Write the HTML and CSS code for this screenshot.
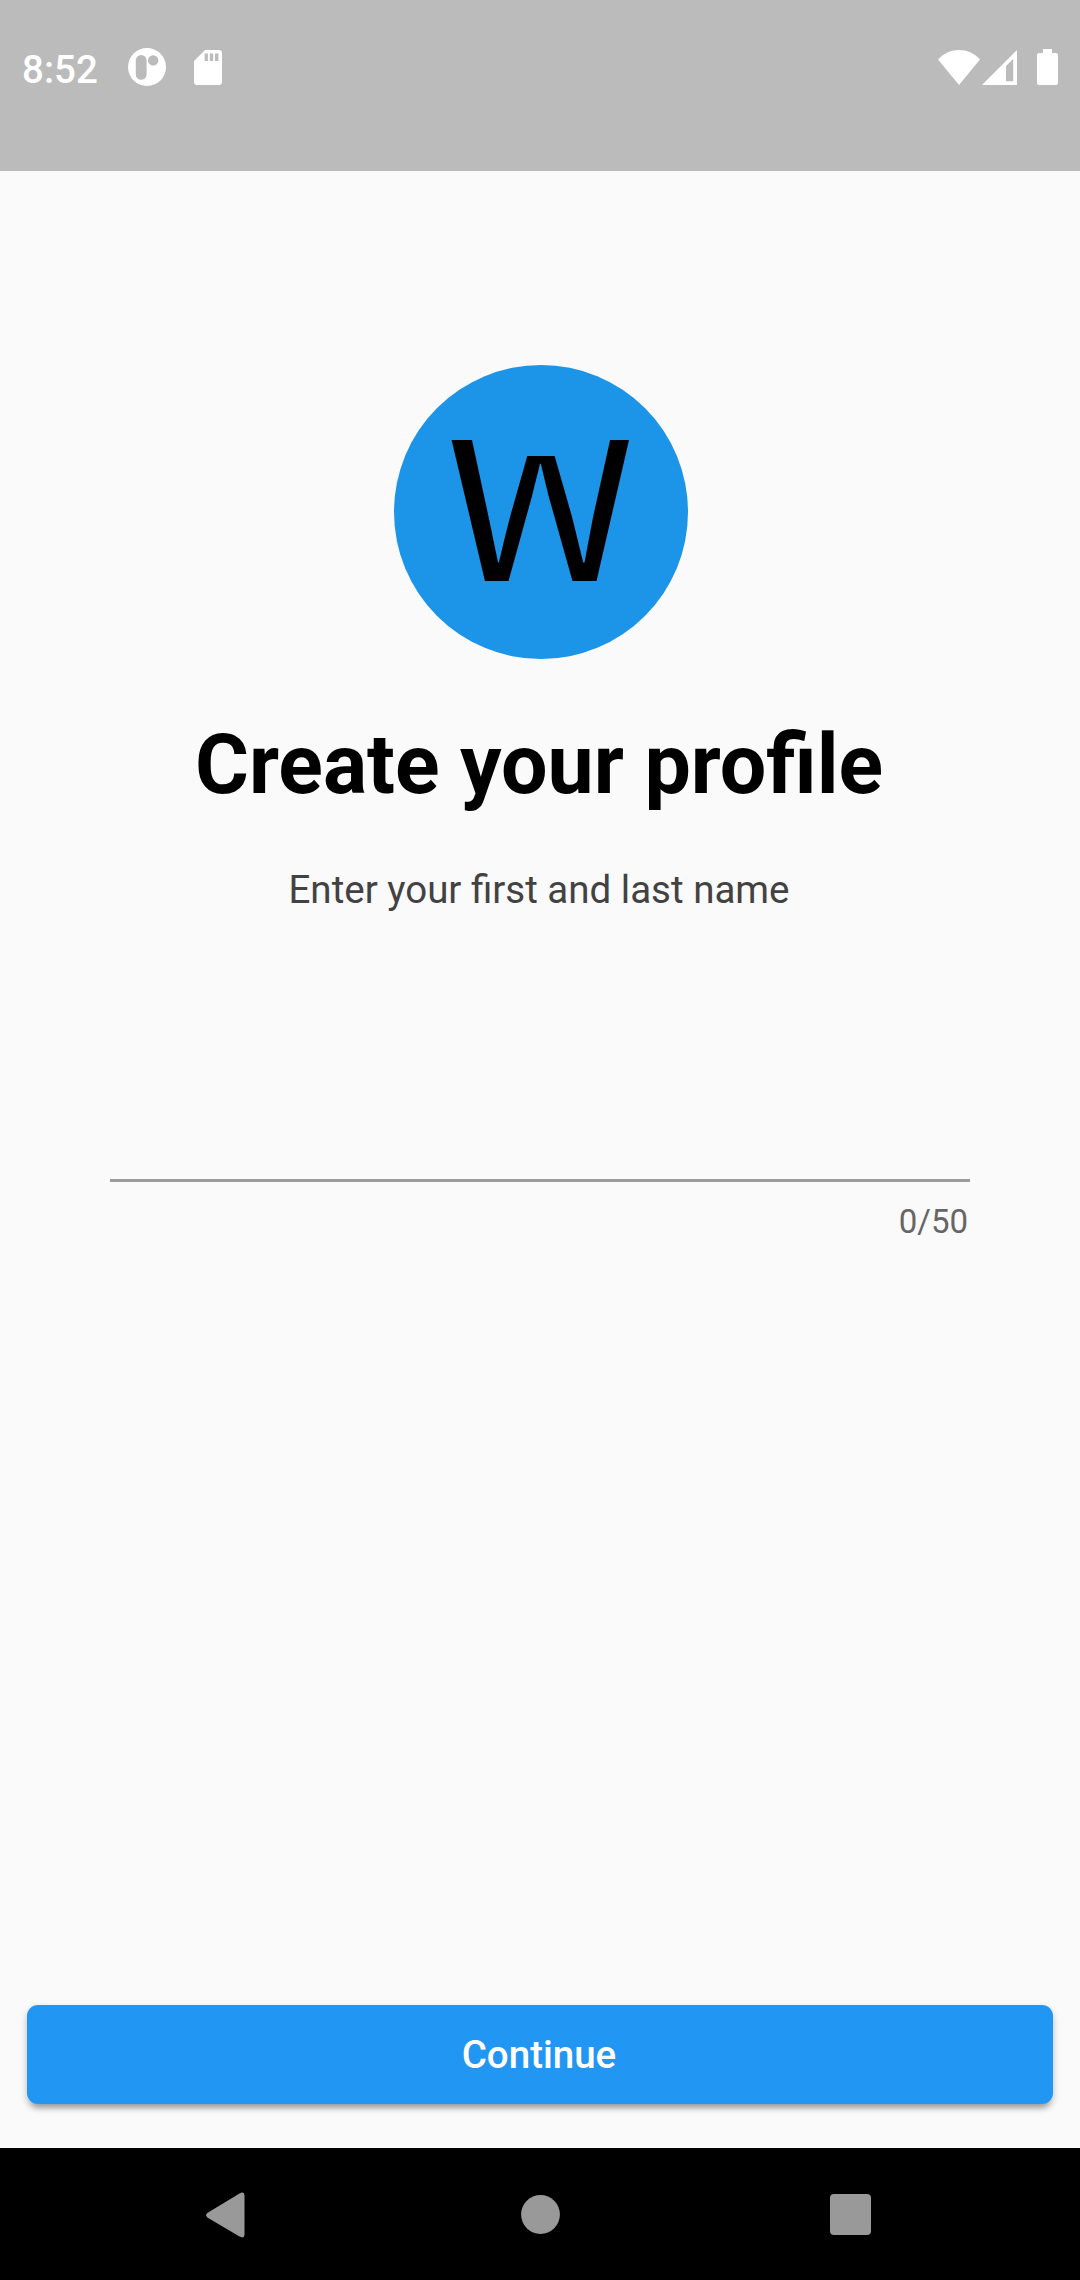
FILE: index.html
```html
<!DOCTYPE html>
<html lang="en">
<head>
<meta charset="utf-8">
<title>Create your profile</title>
<link rel="stylesheet" href="styles.css">
</head>
<body>
<header class="status-bar">
  <div class="status-group">
    <span class="clock">8:52</span>
    <svg class="icon-app" width="38" height="38" viewBox="0 0 38 38"><path fill="#fff" fill-rule="evenodd" d="M19 0a19 19 0 1 1 0 38a19 19 0 1 1 0-38zM13.2 7a5.4 5.4 0 0 0-5.4 5.4v14a5.4 5.4 0 0 0 10.8 0v-14A5.4 5.4 0 0 0 13.2 7zM25.2 7.2a5.2 5.2 0 1 0 0 10.4a5.2 5.2 0 1 0 0-10.4z"/></svg>
    <svg class="icon-card" width="28" height="35" viewBox="0 0 28 35"><path fill="#fff" fill-rule="evenodd" d="M11 0H25a3 3 0 0 1 3 3V32a3 3 0 0 1-3 3H3a3 3 0 0 1-3-3V11zM10.7 3.5v7.5h3.2V3.5zM15.8 3.5v7.5h3.4V3.5zM21 3.5v7.5h3.4V3.5z"/></svg>
  </div>
  <div class="status-group">
    <svg width="42" height="35" viewBox="0 0 42 35"><path fill="#fff" d="M0 9.5C12-3.1 30-3.1 42 9.5L21 35z"/></svg>
    <svg class="icon-signal" width="35" height="35" viewBox="0 0 35 35"><path fill="#fff" fill-rule="evenodd" d="M35 0V35H0zM31.2 9L24 16V31.2h7.2z"/></svg>
    <svg class="icon-battery" width="21" height="36" viewBox="0 0 21 36"><path fill="#fff" d="M6 0h9v4h4a2 2 0 0 1 2 2V34a2 2 0 0 1-2 2H2a2 2 0 0 1-2-2V6a2 2 0 0 1 2-2h4z"/></svg>
  </div>
</header>
<main class="profile">
  <div class="logo"><span class="logo-letter">W</span></div>
  <h1 class="title">Create your profile</h1>
  <p class="subtitle">Enter your first and last name</p>
  <div class="field">
    <input class="name-input" type="text" maxlength="50" aria-label="First and last name">
    <span class="counter">0/50</span>
  </div>
  <button class="continue" type="button">Continue</button>
</main>
<nav class="nav-bar">
  <svg width="39" height="46" viewBox="0 0 39 46"><path fill="#999" d="M1.3 21.1L33.5 1.4Q38.5-1 38.5 4V42Q38.5 47 33.5 44.6L1.3 25.4Q-1 23.3 1.3 21.1z"/></svg>
  <svg width="39" height="39" viewBox="0 0 39 39"><circle cx="19.5" cy="19.5" r="19.4" fill="#999"/></svg>
  <svg width="41" height="41" viewBox="0 0 41 41"><rect width="41" height="41" rx="4" fill="#999"/></svg>
</nav>
</body>
</html>
```
FILE: styles.css
```css
* { box-sizing: border-box; }

body {
  margin: 0;
  width: 1080px;
  height: 2280px;
  display: flex;
  flex-direction: column;
  background: #fafafa;
  font-family: Roboto, sans-serif;
  overflow: hidden;
}

svg { display: block; flex: none; }

.status-bar {
  height: 171px;
  padding: 48px 22px 0 22px;
  display: flex;
  justify-content: space-between;
  background: #bbb;
}

.status-group { display: flex; align-items: flex-start; height: 40px; }
.status-group:last-child { padding-top: 2px; }

.clock {
  width: 106.4px;
  color: #fff;
  font-size: 38.5px;
  font-weight: 500;
  line-height: 44px;
}

.icon-app { margin-right: 28px; }
.icon-card { margin-top: 2px; }
.icon-signal { margin-left: 2px; }
.icon-battery { margin: -1px 0 0 20px; }

.profile {
  flex: 1;
  display: flex;
  flex-direction: column;
  align-items: center;
  padding: 194px 27.4px 44px;
}

.logo {
  width: 294px;
  height: 294px;
  margin-left: 1px;
  border-radius: 50%;
  background: #1c94e8;
  display: flex;
  justify-content: center;
}

/* The clip lowers the middle peak of the mark below its outer arms. */
.logo-letter {
  height: 265px;
  color: #000;
  font-family: "Noto Sans CJK JP", sans-serif;
  font-size: 192px;
  line-height: 265px;
  transform: scaleX(1.12);
  clip-path: polygon(0 0, 35% 0, 35% 91px, 65% 91px, 65% 0, 100% 0, 100% 100%, 0 100%);
}

.title {
  margin: 57px 0 0;
  padding-right: 2px;
  font-size: 82.5px;
  font-weight: 700;
  line-height: 97px;
  white-space: nowrap;
}

.subtitle {
  margin: 54px 0 0;
  padding-right: 2px;
  color: #424242;
  font-size: 38.5px;
  line-height: 45px;
}

.field {
  width: 860px;
  margin-top: 176px;
  display: flex;
  flex-direction: column;
  align-items: flex-end;
}

.name-input {
  width: 100%;
  height: 94px;
  padding: 0;
  border: 0;
  border-bottom: 3px solid #9b9b9b;
  border-radius: 0;
  background: none;
  outline: none;
  font: 44px Roboto, sans-serif;
}

.counter {
  margin-top: 20px;
  padding-right: 2px;
  color: #666;
  font-size: 33px;
  line-height: 39px;
}

.continue {
  width: 100%;
  height: 99px;
  margin-top: auto;
  padding: 0 2px 0 0;
  border: 0;
  border-radius: 11px;
  background: #2196f3;
  box-shadow: 0 8px 5px -5px rgba(0, 0, 0, .2), 0 5px 6px rgba(0, 0, 0, .14), 0 3px 8px rgba(0, 0, 0, .12);
  color: #fff;
  font: 500 38.5px Roboto, sans-serif;
}

.nav-bar {
  height: 132px;
  padding: 1px 209px 0 206px;
  display: grid;
  grid-template-columns: 39px 39px 41px;
  column-gap: 276px;
  align-items: center;
  background: #000;
}

.nav-bar svg:last-child { margin-left: -6px; }
```
